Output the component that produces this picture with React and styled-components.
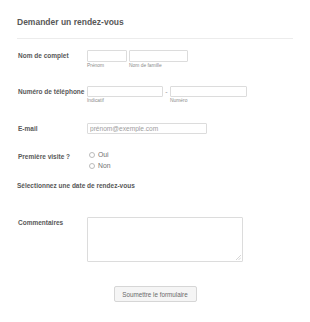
import React from "react";
import styled, { createGlobalStyle } from "styled-components";

const Global = createGlobalStyle`
  html, body {
    margin: 0;
    padding: 0;
    background: #fff;
  }
  body {
    font-family: "Liberation Sans", Arial, sans-serif;
  }
`;

const Form = styled.form`
  width: 310px;
  height: 322px;
  box-sizing: border-box;
  padding: 17px 17px 0 17px;
  display: flex;
  flex-direction: column;
`;

const Header = styled.div`
  padding-bottom: 11px;
  border-bottom: 1px solid #ececec;
`;

const Title = styled.h1`
  margin: 0;
  font-size: 8.5px;
  line-height: 10px;
  font-weight: bold;
  color: #585858;
`;

const Row = styled.div`
  display: flex;
  align-items: flex-start;
  margin-top: ${(p) => p.$top}px;
  padding-left: 1px;
`;

const Label = styled.div`
  width: 69px;
  flex-shrink: 0;
  font-size: 6.5px;
  line-height: ${(p) => p.$lh || 12}px;
  padding-top: ${(p) => p.$pt || 0}px;
  font-weight: bold;
  color: #585858;
  white-space: nowrap;
`;

const Fields = styled.div`
  display: flex;
  align-items: flex-start;
  gap: ${(p) => p.$gap || 2}px;
`;

const Field = styled.div`
  display: flex;
  flex-direction: column;
`;

const Input = styled.input`
  box-sizing: border-box;
  width: ${(p) => p.$w}px;
  height: ${(p) => p.$h || 11}px;
  margin: 0;
  padding: 0 2px;
  border: 1px solid #dcdcdc;
  border-radius: 1px;
  background: #fff;
  font-family: inherit;
  font-size: 6.6px;
  color: #555;
  outline: none;
  &::placeholder {
    color: #9d9d9d;
  }
`;

const Sub = styled.span`
  font-size: 4.9px;
  line-height: 7px;
  color: #8c8c8c;
`;

const Dash = styled.span`
  font-size: 7px;
  line-height: 11px;
  color: #999;
  width: 5px;
  text-align: center;
`;

const Radios = styled.div`
  display: flex;
  flex-direction: column;
  padding-left: 2px;
`;

const RadioLine = styled.label`
  display: flex;
  align-items: center;
  gap: 3px;
  height: 11px;
  font-size: 6.8px;
  color: #707070;
`;

const Circle = styled.span`
  box-sizing: border-box;
  width: 6px;
  height: 6px;
  border-radius: 50%;
  border: 1px solid #bbb;
  background: #fff;
`;

const Section = styled.div`
  margin-top: 10px;
  font-size: 6.5px;
  line-height: 10px;
  font-weight: bold;
  color: #585858;
`;

const AreaWrap = styled.div`
  position: relative;
  width: 156px;
  height: 45px;
`;

const Area = styled.textarea`
  box-sizing: border-box;
  width: 100%;
  height: 100%;
  margin: 0;
  padding: 2px;
  border: 1px solid #dcdcdc;
  border-radius: 1px;
  resize: none;
  font-family: inherit;
  font-size: 7px;
  outline: none;
`;

const Grip = styled.svg`
  position: absolute;
  right: 2px;
  bottom: 2px;
  width: 5px;
  height: 5px;
`;

const Submit = styled.div`
  display: flex;
  justify-content: center;
  margin-top: 24px;
  margin-left: -17px;
  margin-right: -17px;
`;

const Button = styled.button`
  width: 83px;
  height: 16px;
  box-sizing: border-box;
  padding: 0;
  border: 1px solid #d6d6d6;
  border-radius: 2px;
  background: #f5f5f5;
  color: #6a6a6a;
  font-family: inherit;
  font-size: 6.3px;
  cursor: pointer;
`;

export default function App() {
  return (
    <>
      <Global />
      <Form onSubmit={(e) => e.preventDefault()}>
        <Header>
          <Title>Demander un rendez-vous</Title>
        </Header>

        <Row $top={11}>
          <Label>Nom de complet</Label>
          <Fields>
            <Field>
              <Input $w={40} $h={12} />
              <Sub>Prénom</Sub>
            </Field>
            <Field>
              <Input $w={59} $h={12} />
              <Sub>Nom de famille</Sub>
            </Field>
          </Fields>
        </Row>

        <Row $top={17}>
          <Label $lh={11}>Numéro de téléphone</Label>
          <Fields $gap={1}>
            <Field>
              <Input $w={76} />
              <Sub>Indicatif</Sub>
            </Field>
            <Dash>-</Dash>
            <Field>
              <Input $w={77} />
              <Sub>Numéro</Sub>
            </Field>
          </Fields>
        </Row>

        <Row $top={19}>
          <Label $lh={11}>E-mail</Label>
          <Input $w={120} placeholder="prénom@exemple.com" />
        </Row>

        <Row $top={15}>
          <Label $lh={11} $pt={2}>
            Première visite ?
          </Label>
          <Radios>
            <RadioLine>
              <Circle />
              Oui
            </RadioLine>
            <RadioLine>
              <Circle />
              Non
            </RadioLine>
          </Radios>
        </Row>

        <Section>Sélectionnez une date de rendez-vous</Section>

        <Row $top={26}>
          <Label>Commentaires</Label>
          <AreaWrap>
            <Area />
            <Grip viewBox="0 0 5 5">
              <path d="M5 0L0 5M5 2.5L2.5 5" stroke="#c4c4c4" strokeWidth="0.7" />
            </Grip>
          </AreaWrap>
        </Row>

        <Submit>
          <Button type="button">Soumettre le formulaire</Button>
        </Submit>
      </Form>
    </>
  );
}
